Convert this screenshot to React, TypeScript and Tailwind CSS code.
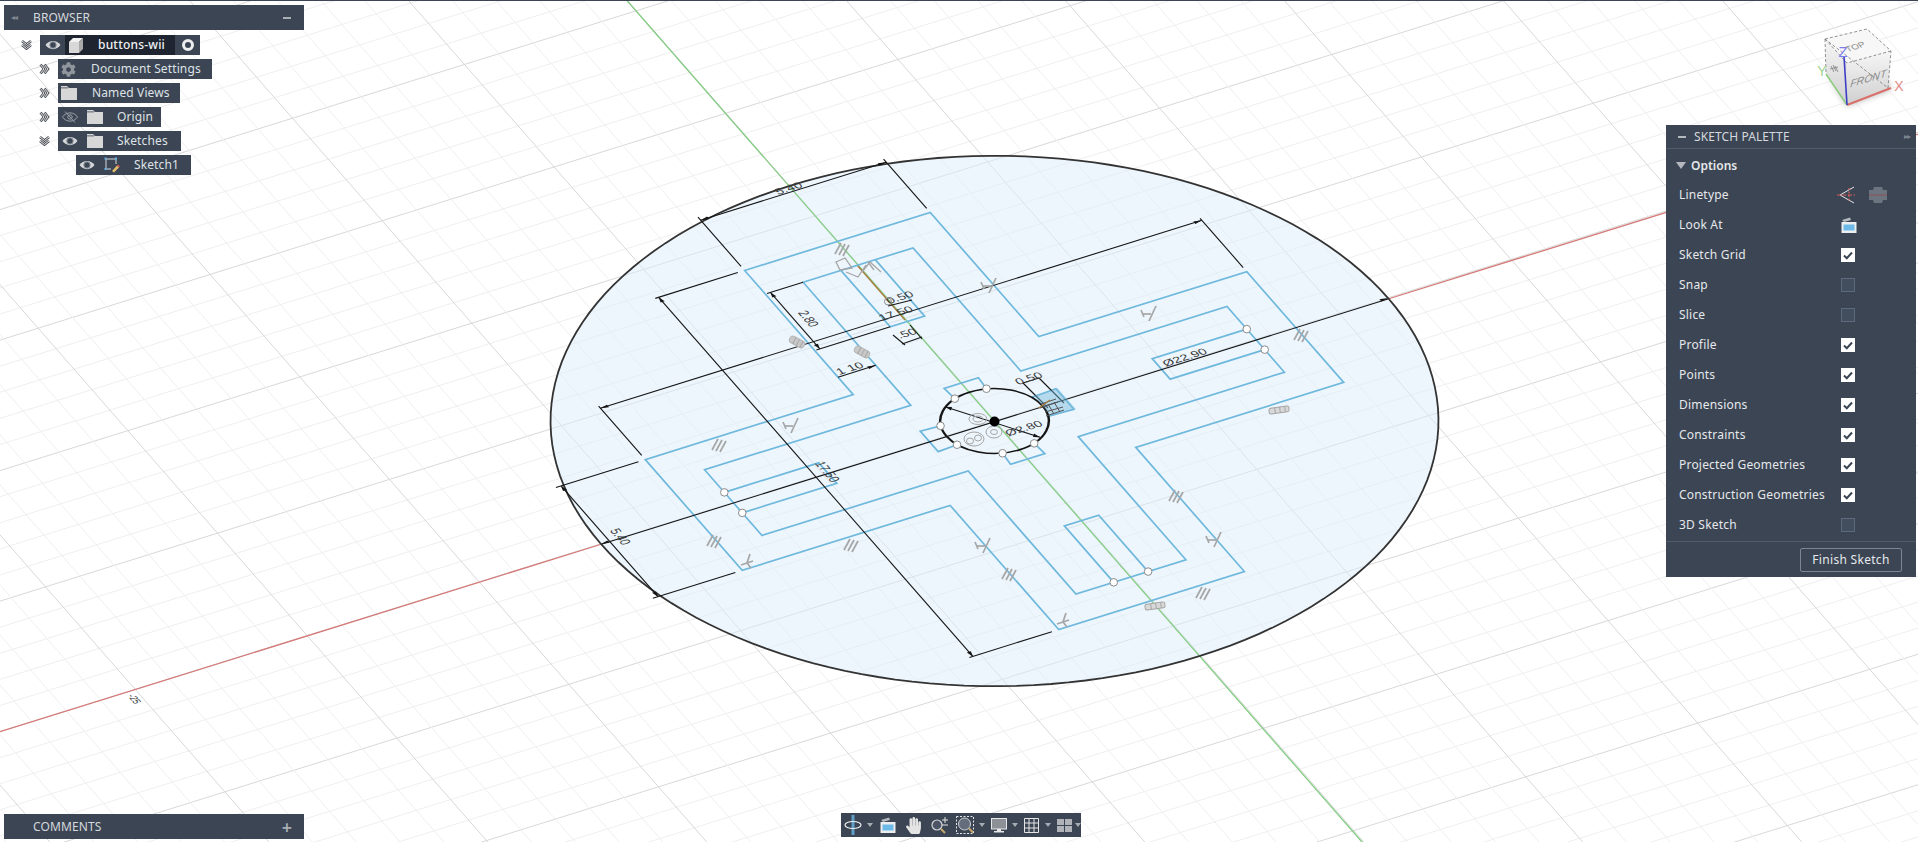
import React from 'react';
import { FaCog, FaHandPaper } from 'react-icons/fa';

// sketch plane -> screen, 1 unit = 1 grid cell
const p = (u: number, v: number): [number, number] => [994.5 + 34.37 * u + 17.95 * v, 421 - 10.74 * u + 20.52 * v];
const pts = (list: number[][]) => list.map(([u, v]) => p(u, v).join(',')).join(' ');
const range = (a: number, b: number) => Array.from({ length: b - a + 1 }, (_, i) => a + i);

const outerCross = [[-2.7, -8.75], [2.7, -8.75], [2.7, -2.7], [8.75, -2.7], [8.75, 2.7], [2.7, 2.7], [2.7, 8.75], [-2.7, 8.75], [-2.7, 2.7], [-8.75, 2.7], [-8.75, -2.7], [-2.7, -2.7]];
const innerCross = [[-1.6, -7.6], [1.6, -7.6], [1.6, -1.6], [7.6, -1.6], [7.6, 1.6], [1.6, 1.6], [1.6, 7.6], [-1.6, 7.6], [-1.6, 1.6], [-7.6, 1.6], [-7.6, -1.6], [-1.6, -1.6]];
const slots = [
  [[-0.5, -7.6], [-0.5, -4.85], [0.5, -4.85], [0.5, -7.6]],
  [[7.6, -0.5], [4.85, -0.5], [4.85, 0.5], [7.6, 0.5]],
  [[-0.5, 7.6], [-0.5, 4.85], [0.5, 4.85], [0.5, 7.6]],
  [[-7.6, -0.5], [-4.85, -0.5], [-4.85, 0.5], [-7.6, 0.5]],
  [[-0.46, -1.33], [-0.5, -1.85], [0.5, -1.85], [0.46, -1.33]],
  [[-0.46, 1.33], [-0.5, 1.85], [0.5, 1.85], [0.46, 1.33]],
  [[-1.33, -0.46], [-1.9, -0.5], [-1.9, 0.5], [-1.33, 0.46]],
  [[1.33, -0.46], [2.05, -0.5], [2.05, 0.5], [1.33, 0.46]],
];
const handles = [[7.6, -0.5], [7.6, 0.5], [-7.6, -0.5], [-7.6, 0.5], [-0.5, 7.6], [0.5, 7.6], [-0.46, -1.33], [0.46, -1.33], [-1.33, 0.46], [-1.33, -0.46], [-0.46, 1.33], [0.46, 1.33]];

// thin black lines: [u1, v1, u2, v2]
const dimLines = [
  [-2.7, -11.2, 2.7, -11.2], [-2.7, -8.95, -2.7, -11.35], [2.7, -8.95, 2.7, -11.35],
  [-11.2, -2.7, -11.2, 2.7], [-8.95, -2.7, -11.35, -2.7], [-8.95, 2.7, -11.35, 2.7],
  [-5.2, -8.75, -5.2, 8.75], [-2.9, -8.75, -5.3, -8.75], [-2.9, 8.75, -5.3, 8.75],
  [-8.75, -5.2, 8.75, -5.2], [-8.75, -2.9, -8.75, -5.3], [8.75, -2.9, 8.75, -5.3],
  [-1.6, -7.6, -2.65, -7.6], [-2.55, -7.6, -2.55, -4.85], [-2.65, -4.85, -0.5, -4.85],
  [-2.7, -3.55, -1.6, -3.55],
];
// short brackets read off the screen directly
const screenLines = [
  [888, 306, 912, 300], [893, 335, 905, 345], [902, 344, 922, 337], [910, 325, 922, 339],
  [1023, 383, 1039, 378], [1023, 383, 1048, 408], [1039, 378, 1064, 403],
];
const arrows = [
  [-2.7, -11.2, 1, 0], [2.7, -11.2, -1, 0], [-11.2, -2.7, 0, 1], [-11.2, 2.7, 0, -1], [-5.2, -8.75, 0, 1], [-5.2, 8.75, 0, -1],
  [-8.75, -5.2, 1, 0], [8.75, -5.2, -1, 0], [-11.45, 0, 1, 0], [11.45, 0, -1, 0], [-2.55, -7.6, 0, 1], [-2.55, -4.85, 0, -1],
  [-1.6, -3.55, -1, 0],
];

const parallelMarks = [[843, 249], [720, 445], [715, 541], [852, 545], [1010, 574], [1177, 496], [1204, 593], [1302, 335]];
const pairMarks = [[790, 425], [988, 285], [1148, 313], [982, 545], [1213, 539]];
const hatchMarks = [[797, 342], [862, 352]];
const perpMarks = [[747, 561], [1063, 620]];
const flatMarks = [[1279, 410], [1155, 606]];

const AxisText = ({ at, t, size = 13 }: { at: [number, number]; t: string; size?: number }) => (
  <text transform={`matrix(1 -0.3125 0.522 0.597 ${at[0]} ${at[1]})`} fontSize={size} textAnchor="middle" fill="#3a3a3a" className="font-['Liberation_Sans',sans-serif]">{t}</text>
);
const CrossText = ({ at, t, size = 13 }: { at: [number, number]; t: string; size?: number }) => (
  <text transform={`matrix(0.522 0.597 -1 0.3125 ${at[0]} ${at[1]})`} fontSize={size} textAnchor="middle" fill="#3a3a3a" className="font-['Liberation_Sans',sans-serif]">{t}</text>
);

const Viewport = () => {
  const [cx, cy] = p(0, 0);
  return (
    <svg className="absolute inset-0" width={1918} height={842} viewBox="0 0 1918 842">
      {/* grid */}
      <g strokeWidth={1}>
        {range(-60, 60).map((i) => {
          const y0 = 731.6 - 26.1 * i;
          return <line key={i} x1={0} y1={y0} x2={1918} y2={y0 - 0.3125 * 1918} stroke={i % 5 === 0 ? '#d8d8d8' : '#efefef'} />;
        })}
        {range(-70, 60).map((i) => {
          const x0 = 627 + 43.8 * i;
          return <line key={i} x1={x0} y1={0} x2={x0 + 0.875 * 842} y2={842} stroke={i % 5 === 0 ? '#d8d8d8' : '#efefef'} />;
        })}
      </g>
      {/* axes */}
      <line x1={0} y1={731.6} x2={602} y2={544} stroke="#d47a78" strokeWidth={1.3} />
      <line x1={1388} y1={299} x2={1918} y2={134} stroke="#d47a78" strokeWidth={1.3} />
      {/* disc */}
      <circle cx={0} cy={0} r={1} transform={`matrix(393.5 -123 205.5 235 ${cx} ${cy})`} fill="#dcedfb" fillOpacity={0.5} />
      <line x1={626.5} y1={0} x2={1362} y2={842} stroke="#84cc84" strokeWidth={1.3} />
      <line x1={857} y1={265} x2={905} y2={320} stroke="#a87c3c" strokeWidth={1.3} />
      <polygon points={Array.from({ length: 160 }, (_, i) => p(11.45 * Math.cos((i * Math.PI) / 80), 11.45 * Math.sin((i * Math.PI) / 80)).join(',')).join(' ')} fill="none" stroke="#333" strokeWidth={1.8} />
      {/* sketch geometry */}
      <g fill="none" stroke="#6fb8dd" strokeWidth={1.7}>
        <polygon points={pts(outerCross)} />
        <polygon points={pts(innerCross)} />
        {slots.map((s, i) => <polyline key={i} points={pts(s)} />)}
      </g>
      {/* dimensions */}
      <g stroke="#151515" strokeWidth={1.1}>
        <line x1={602} y1={544} x2={1388} y2={299} />
        <line x1={945} y1={406.7} x2={1040} y2={437.3} />
        {dimLines.map((d, i) => {
          const [a, b] = [p(d[0], d[1]), p(d[2], d[3])];
          return <line key={i} x1={a[0]} y1={a[1]} x2={b[0]} y2={b[1]} />;
        })}
        {screenLines.map((l, i) => <line key={i} x1={l[0]} y1={l[1]} x2={l[2]} y2={l[3]} />)}
      </g>
      <g fill="#151515">
        {arrows.map(([u, v, du, dv], i) => {
          const f = 0.22;
          const w = 0.06;
          return <polygon key={i} points={pts([[u, v], [u + du * f - dv * w, v + dv * f - du * w], [u + du * f + dv * w, v + dv * f + du * w]])} />;
        })}
        <polygon points="945,406.7 952,407 951,410.5" />
        <polygon points="1040,437.3 1033,437 1034,433.5" />
      </g>
      <ellipse cx={0} cy={0} rx={1} ry={1} transform={`matrix(48.1 -15.04 25.13 28.73 ${cx} ${cy})`} fill="none" stroke="#151515" strokeWidth={0.045} />
      {/* constraint marks */}
      <g stroke="#a6a6a6" strokeWidth={1.7} fill="none">
        {parallelMarks.map(([x, y], i) => (
          <g key={i} transform={`translate(${x} ${y})`}>
            <line x1={-8} y1={5} x2={-2} y2={-6} />
            <line x1={-4} y1={6} x2={2} y2={-5} />
            <line x1={0} y1={7} x2={6} y2={-4} />
          </g>
        ))}
        {pairMarks.map(([x, y], i) => (
          <g key={i} transform={`translate(${x} ${y})`}>
            <line x1={1} y1={8} x2={8} y2={-7} />
            <line x1={-7} y1={-3} x2={-4} y2={4} />
            <line x1={-5} y1={1} x2={3} y2={1} />
          </g>
        ))}
        {perpMarks.map(([x, y], i) => (
          <g key={i} transform={`translate(${x} ${y})`}>
            <line x1={-6} y1={4} x2={6} y2={0} />
            <line x1={0} y1={2} x2={3} y2={-7} />
            <line x1={0} y1={2} x2={4} y2={7} />
          </g>
        ))}
        {flatMarks.map(([x, y], i) => (
          <g key={i} transform={`translate(${x} ${y}) rotate(-8)`} strokeWidth={1}>
            <rect x={-10} y={-3} width={20} height={6} rx={2} fill="#d8d8d8" />
            <line x1={-4} y1={-3} x2={-4} y2={3} />
            <line x1={1} y1={-3} x2={1} y2={3} />
            <line x1={6} y1={-3} x2={6} y2={3} />
          </g>
        ))}
        {hatchMarks.map(([x, y], i) => (
          <g key={i} transform={`translate(${x} ${y}) rotate(28)`} strokeWidth={1}>
            <rect x={-8} y={-3.5} width={16} height={7} rx={3} fill="#c9c9c9" stroke="#b5b5b5" />
            <line x1={-3} y1={-3.5} x2={-3} y2={3.5} />
            <line x1={1} y1={-3.5} x2={1} y2={3.5} />
            <line x1={5} y1={-3.5} x2={5} y2={3.5} />
          </g>
        ))}
        {/* top arm cluster */}
        <path d="M836 262 L845 258 L852 268 L840 270 Z M846 272 L858 277 L866 265 M862 272 L870 262 L881 272 M868 262 L874 270" strokeWidth={1.3} />
        {/* centre cluster */}
        <g strokeWidth={1}>
          <ellipse cx={978} cy={419} rx={9} ry={5.5} />
          <ellipse cx={978} cy={419} rx={5} ry={3} />
          <ellipse cx={974} cy={439} rx={10} ry={7} />
          <ellipse cx={970} cy={441} rx={3.5} ry={3} />
          <ellipse cx={978} cy={438} rx={3.5} ry={3} />
          <ellipse cx={994} cy={432} rx={8} ry={6} />
          <ellipse cx={994} cy={432} rx={3.5} ry={2.5} />
        </g>
      </g>
      {/* tangle of marks at the right stub */}
      <g>
        <polygon points={pts([[1.4, -0.5], [2.1, -0.5], [2.1, 0.5], [1.4, 0.5]])} fill="#74b8da" fillOpacity={0.45} />
        <path d="M1041 404 L1056 399 M1040 408 L1058 402 M1045 412 L1063 407 M1046 416 L1064 410 M1048 404 L1054 414 M1054 402 L1060 412" stroke="#555" strokeWidth={1} />
        <line x1={1039} y1={408} x2={1050} y2={400} stroke="#a87c3c" strokeWidth={1.3} />
      </g>
      {/* dim text */}
      <AxisText at={[791, 191]} t="5.40" />
      <CrossText at={[616, 538]} t="5.40" />
      <AxisText at={[1187, 360]} t="Ø22.90" />
      <CrossText at={[804, 320]} t="2.80" />
      <AxisText at={[852, 371]} t="1 10" />
      <CrossText at={[823, 473]} t="17.50" />
      <AxisText at={[898, 316]} t="17.50" />
      <AxisText at={[902, 300]} t="0.50" />
      <AxisText at={[909, 336]} t=".50" />
      <AxisText at={[1031, 381]} t="0.50" />
      <AxisText at={[1026, 431]} t="Ø2.80" />
      <CrossText at={[131, 700]} t="-25" size={10} />
      {/* handles */}
      <g fill="#fff" stroke="#8a8a8a" strokeWidth={1}>
        {handles.map(([u, v], i) => {
          const [x, y] = p(u, v);
          return <circle key={i} cx={x} cy={y} r={3.8} />;
        })}
        <circle cx={888} cy={301.5} r={3.5} fill="none" />
      </g>
      <circle cx={cx} cy={cy + 0.5} r={5} fill="#000" />
      <NavCube />
    </svg>
  );
};

const NavCube = () => (
  <g>
    <defs>
      <linearGradient id="frontFace" x1="0" y1="0" x2="0" y2="1">
        <stop offset="0" stopColor="#f6f6f6" />
        <stop offset="1" stopColor="#cfcfcf" />
      </linearGradient>
      <filter id="cubeShadow" x="-30%" y="-30%" width="160%" height="160%">
        <feGaussianBlur stdDeviation="3" />
      </filter>
    </defs>
    <polygon points="1826,74 1847,106 1890,90 1888,80 1847,96" fill="#bbb" filter="url(#cubeShadow)" />
    <polygon points="1825,39 1867,29 1891,51 1847,63" fill="#f7f7f7" />
    <polygon points="1847,63 1891,51 1888,88 1847,105" fill="url(#frontFace)" />
    <polygon points="1825,39 1847,63 1847,105 1826,74" fill="url(#frontFace)" />
    <polygon points="1825,39 1867,29 1891,51 1888,88" fill="none" stroke="#777" strokeWidth={0.8} strokeDasharray="3 2" />
    <polyline points="1825,39 1826,74" fill="none" stroke="#777" strokeWidth={0.8} strokeDasharray="3 2" />
    <polyline points="1825,39 1847,63 1891,51" fill="none" stroke="#777" strokeWidth={0.8} strokeDasharray="3 2" />
    <line x1={1847} y1={105} x2={1891} y2={88} stroke="#d9706c" strokeWidth={2} />
    <line x1={1847} y1={105} x2={1826} y2={74} stroke="#8ccb7c" strokeWidth={1.5} />
    <line x1={1847} y1={105} x2={1844} y2={56} stroke="#3c3fc4" strokeWidth={1.6} />
    <text x={1843} y={57} fontSize={15} fill="#7d7df0" textAnchor="middle" className="font-['Liberation_Sans',sans-serif]">Z</text>
    <text x={1822} y={76} fontSize={14} fill="#9ed48c" textAnchor="middle" className="font-['Liberation_Sans',sans-serif]">Y</text>
    <text x={1899} y={91} fontSize={14} fill="#e38a86" textAnchor="middle" className="font-['Liberation_Sans',sans-serif]">X</text>
    <text transform="matrix(1 -0.33 0.55 0.75 1857 49)" fontSize={9} fill="#8a8a8a" textAnchor="middle" className="font-['Liberation_Sans',sans-serif]">TOP</text>
    <text transform="matrix(1 -0.3 -0.1 1 1868 82)" fontSize={10.5} fill="#8a8a8a" fontStyle="italic" textAnchor="middle" className="font-['Liberation_Sans',sans-serif]">FRONT</text>
    <g stroke="#8a8a8a" strokeWidth={0.9}>
      <line x1={1831} y1={66} x2={1834} y2={72} />
      <line x1={1833} y1={65} x2={1836} y2={71} />
      <line x1={1835} y1={66} x2={1838} y2={72} />
      <line x1={1830} y1={69} x2={1838} y2={67} />
    </g>
  </g>
);

const Chevrons = ({ down }: { down?: boolean }) => (
  <svg width={11} height={12} viewBox="0 0 11 12" className={down ? 'rotate-90' : ''}>
    <path d="M1.5 1.5 L5 6 L1.5 10.5 M5.5 1.5 L9 6 L5.5 10.5" fill="none" stroke="#4a4f57" strokeWidth={2.6} />
    <path d="M1.5 1.5 L5 6 L1.5 10.5 M5.5 1.5 L9 6 L5.5 10.5" fill="none" stroke="#e6e6e6" strokeWidth={1} />
  </svg>
);

const Eye = ({ off }: { off?: boolean }) => (
  <svg width={16} height={12} viewBox="0 0 16 12">
    <path d="M0.5 6 C4 0.5 12 0.5 15.5 6 C12 11.5 4 11.5 0.5 6 Z" fill={off ? 'none' : '#d5d7da'} stroke={off ? '#9aa0a8' : 'none'} strokeWidth={1} />
    {off ? (
      <>
        <circle cx={8} cy={6} r={2.2} fill="none" stroke="#9aa0a8" />
        <line x1={3} y1={0.5} x2={13} y2={11.5} stroke="#9aa0a8" />
      </>
    ) : (
      <circle cx={8} cy={6} r={3.2} fill="#3b4554" stroke="#8c929a" strokeWidth={1} />
    )}
  </svg>
);

const Folder = () => (
  <svg width={16} height={14} viewBox="0 0 16 14">
    <path d="M0 0 H6 L8 2 H16 V14 H0 Z" fill="#d7d7d7" />
    <rect x={0} y={1.5} width={7} height={0.8} fill="#3b4554" />
  </svg>
);

const CubeIcon = () => (
  <svg width={14} height={15} viewBox="0 0 14 15">
    <polygon points="0,4 4,0 14,0 10,4" fill="#f2f2f2" />
    <polygon points="0,4 10,4 10,15 0,15" fill="#d8d8d8" />
    <polygon points="10,4 14,0 14,11 10,15" fill="#a9a9a9" />
  </svg>
);

const SketchIcon = () => (
  <svg width={16} height={16} viewBox="0 0 16 16">
    <path d="M2 2 H12 M2 2 V12 M2 12 H7 M12 2 V7" stroke="#d8dade" strokeWidth={1} strokeDasharray="9 1" fill="none" />
    <rect x={0.5} y={0.5} width={2} height={2} fill="#63b3e8" />
    <rect x={11} y={0.5} width={2} height={2} fill="#63b3e8" />
    <rect x={0.5} y={11} width={2} height={2} fill="#63b3e8" />
    <path d="M8 14 L13 8.5 L15 10.5 L10 15.5 Z" fill="#e2bb6a" />
    <path d="M13 8.5 L14 7.5 L16 9.5 L15 10.5 Z" fill="#d6584c" />
  </svg>
);

const Row = ({ indent, chevron, width, children }: { indent: string; chevron?: 'right' | 'down'; width: string; children: React.ReactNode }) => (
  <div className={`flex items-center h-5 ${indent}`}>
    {chevron && (
      <div className="w-[22px] pl-[3px] flex items-center">
        <Chevrons down={chevron === 'down'} />
      </div>
    )}
    <div className={`flex items-center h-5 bg-[#3b4554] text-[#dfe2e6] ${width}`}>{children}</div>
  </div>
);

const Browser = () => (
  <div className="flex flex-col gap-1">
    <div className="flex items-center h-[25px] w-[300px] mb-[1px] bg-[#3b4554] text-[#d5d8dc] text-xs">
      <span className="w-[29px] pl-[7px] text-[#7f8792] text-[8px] tracking-[-1px]">◂◂</span>
      <span className="flex-1 tracking-[0.1px]">BROWSER</span>
      <span className="w-[8px] h-[2px] mr-[13px] bg-[#a9aeb5]" />
    </div>
    <Row indent="ml-[14px]" chevron="down" width="w-[160px]">
      <div className="w-[25px] flex justify-center"><Eye /></div>
      <div className="w-[110px] h-5 flex items-center bg-[#1e2531] pl-[4px]">
        <CubeIcon />
        <span className="ml-[15px] font-medium text-[#f0f1f3] tracking-[0.2px]">buttons-wii</span>
      </div>
      <div className="flex-1 flex justify-center">
        <span className="w-3 h-3 rounded-full border-[3.5px] border-[#eeeeee] bg-[#3b4554]" />
      </div>
    </Row>
    <Row indent="ml-[32px]" chevron="right" width="w-[154px]">
      <FaCog className="ml-[3px] text-[#8f959d] text-[15px]" />
      <span className="ml-[15px] tracking-[0.12px]">Document Settings</span>
    </Row>
    <Row indent="ml-[32px]" chevron="right" width="w-[122px]">
      <span className="ml-[3px] flex"><Folder /></span>
      <span className="ml-[15px] tracking-[0.12px]">Named Views</span>
    </Row>
    <Row indent="ml-[32px]" chevron="right" width="w-[103px]">
      <span className="ml-[4px] flex"><Eye off /></span>
      <span className="ml-[9px] flex"><Folder /></span>
      <span className="ml-[14px] tracking-[0.12px]">Origin</span>
    </Row>
    <Row indent="ml-[32px]" chevron="down" width="w-[123px]">
      <span className="ml-[4px] flex"><Eye /></span>
      <span className="ml-[9px] flex"><Folder /></span>
      <span className="ml-[14px] tracking-[0.12px]">Sketches</span>
    </Row>
    <Row indent="ml-[72px]" width="w-[115px]">
      <span className="ml-[3px] flex"><Eye /></span>
      <span className="ml-[9px] flex"><SketchIcon /></span>
      <span className="ml-[14px] tracking-[0.12px]">Sketch1</span>
    </Row>
  </div>
);

const Check = ({ on }: { on: boolean }) =>
  on ? (
    <span className="w-[14px] h-[14px] bg-white flex items-center justify-center">
      <svg width={10} height={9} viewBox="0 0 10 9"><path d="M1 4.5 L3.8 7.2 L9 1.5" fill="none" stroke="#3b4554" strokeWidth={2} /></svg>
    </span>
  ) : (
    <span className="w-[14px] h-[14px] bg-[#424d5d] border border-[#5e6a7b]" />
  );

const LinetypeIcons = () => (
  <div className="flex items-center gap-[14px] ml-[-4px]">
    <svg width={18} height={18} viewBox="0 0 18 18">
      <path d="M17 1 L3 9 L17 17" fill="none" stroke="#e4e6e9" strokeWidth={1} />
      <line x1={0} y1={9} x2={18} y2={9} stroke="#d8605f" strokeWidth={1.2} strokeDasharray="4 1.5" />
      <line x1={12} y1={2} x2={12} y2={16} stroke="#d8605f" strokeWidth={1.2} strokeDasharray="2 1.5" />
    </svg>
    <svg width={18} height={18} viewBox="0 0 18 18">
      <path d="M5 1 H13 L14 4 H18 V14 H14 L13 17 H5 L4 14 H0 V4 H4 Z" fill="#6c7480" />
      <line x1={0} y1={9} x2={18} y2={9} stroke="#8d4f52" strokeWidth={1} />
    </svg>
  </div>
);

const LookAt = ({ className = '' }: { className?: string }) => (
  <svg width={16} height={16} viewBox="0 0 16 16" className={className}>
    <path d="M1 3 L9 0.5 L10 3 L3 5 Z" fill="#b5b8bc" />
    <rect x={0.5} y={5} width={15} height={11} fill="#eceef0" />
    <rect x={2.5} y={7.5} width={11} height={6} fill="#6db9e8" />
  </svg>
);

const palette = [
  { label: 'Sketch Grid', on: true }, { label: 'Snap', on: false }, { label: 'Slice', on: false }, { label: 'Profile', on: true },
  { label: 'Points', on: true }, { label: 'Dimensions', on: true }, { label: 'Constraints', on: true },
  { label: 'Projected Geometries', on: true }, { label: 'Construction Geometries', on: true }, { label: '3D Sketch', on: false },
];

const PaletteRow = ({ label, children }: { label: string; children: React.ReactNode }) => (
  <div className="flex items-center h-[30px] pl-[13px]">
    <span className="w-[162px] tracking-[0.2px]">{label}</span>
    {children}
  </div>
);

const SketchPalette = () => (
  <div className="absolute left-[1666px] top-[125px] w-[250px] bg-[#3b4554] text-[#e6e8eb] text-xs">
    <div className="flex items-center h-[24px] pl-[12px] pr-[6px] border-b border-[#515b6a] text-[#d5d8dc]">
      <span className="w-[8px] h-[2px] bg-[#b4b8be]" />
      <span className="ml-[8px] flex-1 tracking-[0.1px]">SKETCH PALETTE</span>
      <span className="text-[#7f8792] text-[8px] tracking-[-1px]">▸▸</span>
    </div>
    <div className="flex items-center h-[27px] mt-[3px] mb-[1px] pl-[10px]">
      <span className="w-0 h-0 border-l-[5px] border-r-[5px] border-t-[7px] border-l-transparent border-r-transparent border-t-[#b4b8be]" />
      <span className="ml-[5px] font-semibold">Options</span>
    </div>
    <div className="flex flex-col">
      <PaletteRow label="Linetype"><LinetypeIcons /></PaletteRow>
      <PaletteRow label="Look At"><LookAt /></PaletteRow>
      {palette.map((r) => (
        <PaletteRow key={r.label} label={r.label}><Check on={r.on} /></PaletteRow>
      ))}
    </div>
    <div className="flex justify-end h-[36px] mt-[1px] pt-[6px] pr-[14px] border-t border-[#515b6a]">
      <button className="w-[102px] h-[24px] border border-[#7b8593] rounded-[2px] tracking-[0.3px] text-[#e6e8eb]">Finish Sketch</button>
    </div>
  </div>
);

const Caret = () => <span className="w-0 h-0 border-l-[3px] border-r-[3px] border-t-[4px] border-l-transparent border-r-transparent border-t-[#a7acb3]" />;

const Toolbar = () => (
  <div className="absolute left-[841px] top-[813px] w-[240px] h-6 flex items-center pl-[3px] bg-[#3b4554]">
    <svg width={18} height={20} viewBox="0 0 18 20">
      <rect x={7.5} y={0} width={3} height={20} fill="#5f9fc8" />
      <ellipse cx={9} cy={10} rx={8} ry={3.5} fill="none" stroke="#f0f0f0" strokeWidth={1.2} />
    </svg>
    <span className="ml-[5px] flex"><Caret /></span>
    <span className="ml-[7px] flex"><LookAt /></span>
    <FaHandPaper className="ml-[9px] text-[#e4e4e4] text-[17px]" />
    <svg className="ml-[8px]" width={20} height={20} viewBox="0 0 20 20">
      <circle cx={7} cy={10} r={5} fill="#4b5565" stroke="#d6d8dc" strokeWidth={1.2} />
      <line x1={11} y1={14} x2={15} y2={18} stroke="#c9a868" strokeWidth={2} />
      <path d="M15 2 V8 M12 5 H18 M12 10 H18" stroke="#e6e6e6" strokeWidth={1} />
    </svg>
    <svg className="ml-[6px]" width={18} height={18} viewBox="0 0 18 18">
      <rect x={0.5} y={0.5} width={17} height={17} fill="none" stroke="#e6e6e6" strokeWidth={1} strokeDasharray="2 1.5" />
      <circle cx={8.5} cy={8} r={6} fill="#636d7b" stroke="#cfd2d6" strokeWidth={1} />
      <line x1={13} y1={12.5} x2={17} y2={16.5} stroke="#c9a868" strokeWidth={2} />
    </svg>
    <span className="ml-[5px] flex"><Caret /></span>
    <svg className="ml-[6px]" width={16} height={15} viewBox="0 0 16 15">
      <rect x={0.5} y={0.5} width={15} height={10.5} fill="#8d9197" stroke="#e8e8e8" />
      <rect x={6} y={11} width={4} height={2} fill="#e8e8e8" />
      <rect x={3} y={13} width={10} height={1.5} fill="#e8e8e8" />
    </svg>
    <span className="ml-[5px] flex"><Caret /></span>
    <svg className="ml-[6px]" width={15} height={15} viewBox="0 0 15 15">
      <path d="M0.5 0.5 H14.5 V14.5 H0.5 Z M5 0.5 V14.5 M10 0.5 V14.5 M0.5 5 H14.5 M0.5 10 H14.5" fill="none" stroke="#e6e6e6" strokeWidth={1} />
    </svg>
    <span className="ml-[6px] flex"><Caret /></span>
    <svg className="ml-[6px]" width={15} height={15} viewBox="0 0 15 15">
      <rect x={0} y={1} width={7} height={6} fill="#b0b3b8" />
      <rect x={8} y={1} width={7} height={6} fill="#b0b3b8" />
      <rect x={0} y={8} width={7} height={6} fill="#b0b3b8" />
      <rect x={8} y={8} width={7} height={6} fill="#b0b3b8" />
    </svg>
    <span className="ml-[3px] flex"><Caret /></span>
  </div>
);

export default function App() {
  return (
    <div className="relative w-[1918px] h-[842px] overflow-hidden bg-white font-['Noto_Sans',sans-serif]">
      <Viewport />
      <div className="absolute left-0 top-0 w-full h-px bg-[#3b4554]" />
      {/* left column: browser on top, comments at the bottom */}
      <div className="absolute left-[4px] top-[5px] bottom-[3px] flex flex-col justify-between text-xs">
        <Browser />
        <div className="flex items-center h-[25px] w-[300px] bg-[#3b4554] text-[#d5d8dc]">
          <span className="ml-[29px] flex-1 tracking-[0.1px]">COMMENTS</span>
          <span className="mr-[12px] text-[#a9aeb5] text-lg font-semibold leading-none">+</span>
        </div>
      </div>
      <SketchPalette />
      <Toolbar />
    </div>
  );
}
